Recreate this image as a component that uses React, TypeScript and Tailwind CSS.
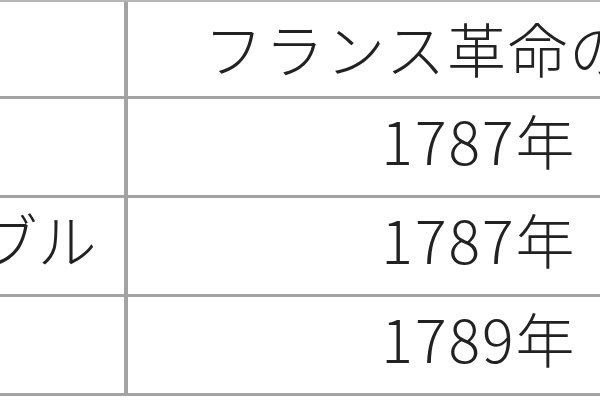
export default function App() {
  const rows = [
    { left: "名士会", right: "1787年" },
    { left: "グルノーブル", right: "1787年" },
    { left: "三部会", right: "1789年" },
  ];
  return (
    <div className="w-[600px] h-[400px] overflow-hidden bg-white font-['Noto_Sans_CJK_JP','Noto_Sans_CJK_SC',sans-serif] text-[#222222] font-light">
      <div className="-ml-[300px] w-[1128px] border-t-2 border-[#b5b5b5]">
        <div className="flex h-[97px] border-b-[3px] border-[#a3a3a3]">
          <div className="w-[424px] shrink-0" />
          <div className="w-[704px] shrink-0 border-l-4 border-[#a3a3a3] pt-[16px] text-center text-[59px] leading-none tracking-[2px] whitespace-nowrap">
            フランス革命の年表
          </div>
        </div>
        {rows.map((r, i) => (
          <div
            key={i}
            className="flex h-[99px] border-b-[3px] border-[#a3a3a3]"
          >
            <div className="w-[424px] shrink-0 pl-[46px] pt-[11px] text-[59px] leading-none whitespace-nowrap">
              {r.left}
            </div>
            <div className="w-[704px] shrink-0 border-l-4 border-[#a3a3a3] pt-[11px] pl-[2px] text-center text-[59px] leading-none tracking-[2px] whitespace-nowrap">
              {r.right}
            </div>
          </div>
        ))}
      </div>
    </div>
  );
}
